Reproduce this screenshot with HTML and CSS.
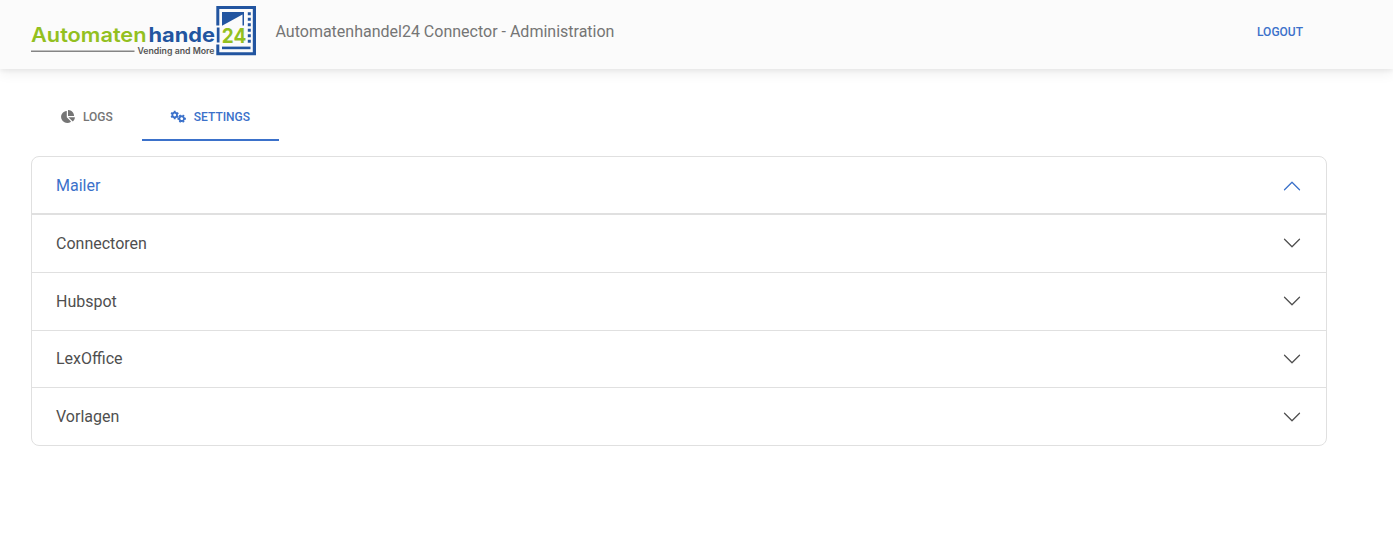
FILE: index.html
```html
<!DOCTYPE html>
<html lang="de">
<head>
<meta charset="utf-8">
<title>Automatenhandel24 Connector</title>
<link rel="stylesheet" href="styles.css">
</head>
<body>
<header class="navbar">
  <svg class="logo" width="226" height="52" viewBox="30 5 226 52" role="img" aria-label="Automatenhandel24">
    <g class="logo-word">
      <text class="green" x="31" y="42" textLength="115.500" lengthAdjust="spacingAndGlyphs">Automaten</text>
      <text class="blue" x="148.500" y="42" textLength="66.500" lengthAdjust="spacingAndGlyphs">hande</text>
    </g>
    <path d="M31 51.300H134.500" stroke="#858585" stroke-width="1.600"/>
    <text class="tagline" x="137.500" y="54" textLength="77" lengthAdjust="spacingAndGlyphs">Vending and More</text>
    <path fill="#2255a0" fill-rule="evenodd" d="M216.300 6H256v49.200H216.300V44.500H219.300V52.200H252.800V9H219.300V25.500H216.300z"/>
    <path fill="#2255a0" d="M216.800 27.500h2.700V42.500h-2.700z"/>
    <path fill="#2255a0" d="M222 12h22v13.500h-1.500V14.500L222 25.800z"/>
    <path d="M249.300 12.300V43" stroke="#2255a0" stroke-width="3" stroke-dasharray="3 2.500"/>
    <path d="M222 47.900H250.500" stroke="#2255a0" stroke-width="2.600"/>
    <text class="number" x="221.800" y="42.500" textLength="24.500" lengthAdjust="spacingAndGlyphs">24</text>
  </svg>
  <span class="title">Automatenhandel24 Connector - Administration</span>
  <a class="logout">LOGOUT</a>
</header>
<main>
  <nav class="tabs">
    <a class="tab">
      <svg class="pie" width="14" height="13" viewBox="0 0 544 512"><path fill="currentColor" d="M527.790 288H290.500l158.030 158.030c6.040 6.040 15.980 6.530 22.190.680 38.700-36.460 65.320-85.610 73.130-140.860 1.340-9.460-6.510-17.850-16.060-17.850zm-15.830-64.800C503.720 103.740 408.260 8.280 288.800.040 279.680-.590 272 7.100 272 16.240V240h223.770c9.140 0 16.820-7.680 16.190-16.800zM224 288V50.710c0-9.550-8.390-17.400-17.840-16.060C86.990 51.490-4.100 155.600.140 280.370 4.500 408.510 114.830 513.590 243.030 511.980c50.400-.630 96.970-16.870 135.260-44.030 7.900-5.600 8.420-17.230 1.570-24.080L224 288z"/></svg>
      <span>LOGS</span>
    </a>
    <a class="tab active">
      <svg class="cogs" width="16" height="14" viewBox="170 110 16 14">
        <defs>
          <g id="gear" fill="none" stroke="currentColor">
            <circle r="2.300" stroke-width="1.800"/>
            <path stroke-width="1.900" d="M0-2.600V-4.200M0 2.600V4.200M2.250-1.300L3.640-2.100M2.250 1.300L3.640 2.100M-2.250-1.300L-3.640-2.100M-2.250 1.300L-3.640 2.100"/>
          </g>
        </defs>
        <use href="#gear" transform="translate(174.700 115)"/>
        <use href="#gear" transform="translate(181.700 118.700) rotate(30)"/>
      </svg>
      <span>SETTINGS</span>
    </a>
  </nav>
  <section class="accordion">
    <div class="item open"><span>Mailer</span><svg class="chevron" viewBox="0 0 16 16"><path d="M2 5l6 6 6-6"/></svg></div>
    <div class="item"><span>Connectoren</span><svg class="chevron" viewBox="0 0 16 16"><path d="M2 5l6 6 6-6"/></svg></div>
    <div class="item hubspot"><span>Hubspot</span><svg class="chevron" viewBox="0 0 16 16"><path d="M2 5l6 6 6-6"/></svg></div>
    <div class="item"><span>LexOffice</span><svg class="chevron" viewBox="0 0 16 16"><path d="M2 5l6 6 6-6"/></svg></div>
    <div class="item"><span>Vorlagen</span><svg class="chevron" viewBox="0 0 16 16"><path d="M2 5l6 6 6-6"/></svg></div>
  </section>
</main>
</body>
</html>
```
FILE: styles.css
```css
* { box-sizing: border-box; }
body {
  margin: 0;
  background: #fff;
  color: #4f4f4f;
  font: 400 16px/1.6 Roboto, sans-serif;
}
.navbar {
  display: flex;
  align-items: flex-start;
  height: 69px;
  padding: 5px 90px 0 30px;
  background: #fbfbfb;
  box-shadow: 0 4px 12px 0 rgba(0,0,0,.07), 0 2px 4px rgba(0,0,0,.05);
}
.logo { display: block; flex: none; }
.logo-word { font: 600 20px Inter, sans-serif; }
.green, .number { fill: #93c01f; }
.blue { fill: #2255a0; font-weight: 700; }
.tagline { font: 600 8.500px Inter, sans-serif; fill: #555; }
.number { font: 700 20px Inter, sans-serif; }
.title { margin: 14px 0 0 19.500px; color: #757575; white-space: nowrap; }
.logout {
  margin: 17px 0 0 auto;
  color: #3b71ca;
  font-size: 12px;
  font-weight: 500;
  line-height: 20px;
}
main { padding: 23px 66px 0 31px; }
.tabs { display: flex; height: 49px; }
.tab {
  display: flex;
  align-items: center;
  height: 49px;
  padding: 2px 29px 0 30px;
  border-bottom: 2px solid transparent;
  color: #757575;
  font-size: 12px;
  font-weight: 500;
  line-height: 1;
}
.pie { margin-right: 8px; }
.cogs { margin-right: 8px; }
.tab.active { padding-left: 28px; border-color: #3b71ca; color: #3b71ca; }
.accordion {
  margin-top: 15px;
  border: 1px solid #e0e0e0;
  border-radius: 8px;
  overflow: hidden;
}
.item {
  display: flex;
  align-items: center;
  justify-content: space-between;
  height: 57.800px;
  padding: 0 24px;
  border-bottom: 1px solid #e0e0e0;
}
.item:last-child { height: 57px; border-bottom: 0; }
.item.open { height: 58px; padding-top: 2px; border-bottom-width: 2px; color: #3b71ca; }
.hubspot span { padding-top: 1px; }
.chevron {
  width: 20px;
  height: 20px;
  fill: none;
  stroke: currentColor;
  stroke-linecap: round;
  stroke-linejoin: round;
}
.open .chevron { transform: rotate(180deg); }
```
